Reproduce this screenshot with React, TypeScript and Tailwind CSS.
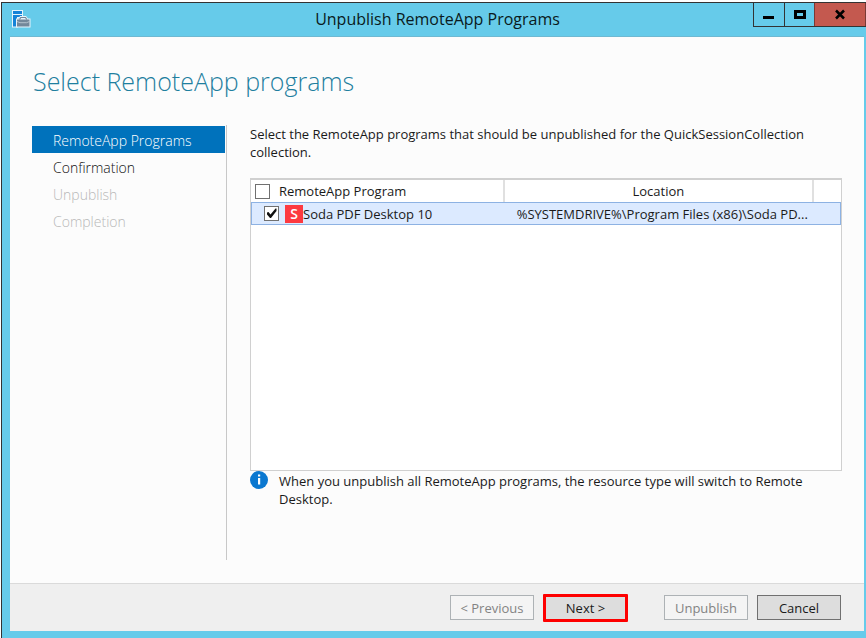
import { useState } from "react";
import clsx from "clsx";

type StepState = "active" | "ready" | "locked";

interface Step {
	label: string;
	state: StepState;
}

interface Program {
	name: string;
	location: string;
}

const STEPS: Step[] = [
	{ label: "RemoteApp Programs", state: "active" },
	{ label: "Confirmation", state: "ready" },
	{ label: "Unpublish", state: "locked" },
	{ label: "Completion", state: "locked" },
];

const PROGRAMS: Program[] = [
	{
		name: "Soda PDF Desktop 10",
		location: "%SYSTEMDRIVE%\\Program Files (x86)\\Soda PD...",
	},
];

export default function App() {
	const [selected, setSelected] = useState<string[]>([PROGRAMS[0].name]);

	const toggle = (name: string) =>
		setSelected((prev) =>
			prev.includes(name) ? prev.filter((n) => n !== name) : [...prev, name],
		);

	return (
		<div className="flex min-h-screen bg-white pt-0.5 pl-px font-['Open_Sans','Noto_Sans',sans-serif] text-[13px] text-[#1a1a1a]">
			<div className="flex min-w-0 flex-1 flex-col border-t border-l border-[#333] bg-[#66cbea] pb-[7px]">
				<TitleBar />
				<div className="mr-0.5 ml-2 flex flex-1 flex-col border-t border-[#6fb9d2] bg-[#fcfcfc]">
					<main className="flex flex-1 flex-col px-[22px] pt-7 pb-[23px]">
						<h1 className="pl-px text-[25px] leading-8 font-light text-[#1f7f9f]">
							Select RemoteApp programs
						</h1>
						<div className="mt-7 flex flex-1">
							<StepList />
							<section className="flex min-w-0 flex-1 flex-col pb-[52px] pl-[23px]">
								<p className="leading-[18px]">
									Select the RemoteApp programs that should be unpublished for the
									QuickSessionCollection collection.
								</p>
								<ProgramTable selected={selected} onToggle={toggle} />
								<div className="flex gap-[11px]">
									<InfoIcon />
									<p className="pt-px leading-[18px]">
										When you unpublish all RemoteApp programs, the resource type
										will switch to Remote Desktop.
									</p>
								</div>
							</section>
						</div>
					</main>
					<Footer />
				</div>
			</div>
		</div>
	);
}

function TitleBar() {
	return (
		<header className="flex h-[33px] items-start">
			<div className="w-[120px] pt-[6px] pl-2.5">
				<ServerIcon />
			</div>
			<div className="flex-1 pt-1.5 text-center text-base leading-5 text-[#0a1a20]">
				Unpublish RemoteApp Programs
			</div>
			<div className="flex h-6 border-b border-l border-[#333]">
				<button
					type="button"
					aria-label="Minimize"
					className="flex w-[31px] items-center justify-center border-r border-[#333]"
				>
					<svg width="12" height="12" viewBox="0 0 12 12">
						<path d="M0 7h11v3H0z" fill="#000" />
					</svg>
				</button>
				<button
					type="button"
					aria-label="Maximize"
					className="flex w-[29px] items-center justify-center"
				>
					<svg width="12" height="12" viewBox="0 0 12 12">
						<path d="M0 1h12v9H0zM3 4v3h6V4z" fill="#000" fillRule="evenodd" />
					</svg>
				</button>
				<button
					type="button"
					aria-label="Close"
					className="flex w-[52px] items-center justify-center border-x border-[#7a3a35] bg-[#c4594f]"
				>
					<svg width="12" height="12" viewBox="0 0 12 12">
						<path d="M2 1.500l8 8M10 1.500l-8 8" stroke="#000" strokeWidth="2.500" />
					</svg>
				</button>
			</div>
		</header>
	);
}

function StepList() {
	return (
		<nav className="w-[195px] shrink-0 border-r border-[#c8c8c8] pt-px">
			<ol className="mr-px">
				{STEPS.map((step) => (
					<li key={step.label}>
						<button
							type="button"
							disabled={step.state === "locked"}
							className={clsx(
								"block h-[27px] w-full pt-0.5 pl-[21px] text-left text-sm leading-[25px] font-light",
								step.state === "active" && "bg-[#0072bc] text-white",
								step.state === "ready" && "text-[#111]",
								step.state === "locked" && "text-[#b8b8b8]",
							)}
						>
							{step.label}
						</button>
					</li>
				))}
			</ol>
		</nav>
	);
}

function ProgramTable({
	selected,
	onToggle,
}: {
	selected: string[];
	onToggle: (name: string) => void;
}) {
	return (
		<div className="mt-[17px] flex-1 border border-t-2 border-[#d0d0d0] bg-white">
			<table className="w-full table-fixed border-separate border-spacing-0">
				<colgroup>
					<col className="w-[43%]" />
					<col />
					<col className="w-[27px]" />
				</colgroup>
				<thead>
					<tr className="h-[22px]">
						<th className="border-r-2 border-[#e0e0e0] p-0 text-left leading-5 font-normal">
							<label className="flex items-center gap-[9px] pl-1">
								<Tick
									label="Select all programs"
									checked={false}
									onChange={() => PROGRAMS.forEach((p) => onToggle(p.name))}
								/>
								RemoteApp Program
							</label>
						</th>
						<th className="border-r-2 border-[#e0e0e0] p-0 leading-5 font-normal">
							Location
						</th>
						<td className="p-0" />
					</tr>
				</thead>
				<tbody>
					{PROGRAMS.map((program) => (
						<tr key={program.name} className="h-[23px] bg-[#dceaff]">
							<td className="border-y border-l border-[#8db2e3] p-0 leading-5">
								<label className="flex items-center pl-3">
									<Tick
										label={program.name}
										checked={selected.includes(program.name)}
										onChange={() => onToggle(program.name)}
									/>
									<span className="ml-1.5 flex size-[18px] items-center justify-center bg-[#fd3a40] text-sm leading-none font-semibold text-white">
										S
									</span>
									{program.name}
								</label>
							</td>
							<td className="truncate border-y border-[#8db2e3] p-0 pl-3 leading-5">
								{program.location}
							</td>
							<td className="border-y border-r border-[#8db2e3] p-0" />
						</tr>
					))}
				</tbody>
			</table>
		</div>
	);
}

function Tick({
	label,
	checked,
	onChange,
}: {
	label: string;
	checked: boolean;
	onChange: () => void;
}) {
	return (
		<span className="grid size-[15px] shrink-0">
			<input
				type="checkbox"
				aria-label={label}
				checked={checked}
				onChange={onChange}
				className="col-start-1 row-start-1 size-[15px] appearance-none border border-[#707070] bg-white"
			/>
			{checked ? (
				<svg
					viewBox="0 0 15 15"
					className="pointer-events-none col-start-1 row-start-1 size-[15px]"
				>
					<path d="M3 6.500l1.500-.5 2 2.500L11.500 2.500h1V5L7 12H6L3 8.500z" fill="#111" />
				</svg>
			) : null}
		</span>
	);
}

const BUTTON = "h-[25px] w-[84px] border";

function Footer() {
	return (
		<footer className="flex h-12 items-center justify-end border-t border-[#dadada] bg-[#efefef] pr-[23px] leading-5">
			<button
				type="button"
				disabled
				className={clsx(BUTTON, "border-[#adb2b5] bg-[#f4f4f4] text-[#838383]")}
			>
				&lt; Previous
			</button>
			<button
				type="button"
				className="ml-[9px] h-7 w-[85px] rounded-[1px] border-3 border-[#fe0000] bg-[#dddddd]"
			>
				Next &gt;
			</button>
			<button
				type="button"
				disabled
				className={clsx(BUTTON, "ml-9 border-[#adb2b5] bg-[#f4f4f4] text-[#838383]")}
			>
				Unpublish
			</button>
			<button
				type="button"
				className={clsx(BUTTON, "ml-[9px] border-[#707070] bg-[#dddddd]")}
			>
				Cancel
			</button>
		</footer>
	);
}

function InfoIcon() {
	return (
		<svg width="18" height="18" viewBox="0 0 18 18" className="shrink-0">
			<circle cx="9" cy="9" r="9" fill="#0b78d0" />
			<path d="M8 3.500h2.200v2H8zM8 7h2.200v6.500H8z" fill="#fff" />
		</svg>
	);
}

// Server tower with a toolbox in front of it
function ServerIcon() {
	return (
		<svg width="19" height="19" viewBox="0 0 19 19">
			<path d="M0 1h11v8H6v9.500H0z" fill="#e6f4fb" />
			<path d="M1 2h9v3H1zM1 6h9v2H5V17.500H1z" fill="#1483d8" />
			<path d="M4 9.500h2.500L8 7h6l2 2.500h2.500v9H4z" fill="#e6f4fb" />
			<path d="M5 10.500h12.500v7H5z" fill="#73879a" />
			<path d="M7.500 10.500L8.700 8.500h4.800l1.300 2" fill="none" stroke="#73879a" strokeWidth="1.200" />
			<path d="M5 12.500l3 1.200h6.500l3-1.200" fill="none" stroke="#c3ced8" strokeWidth="0.800" />
		</svg>
	);
}
